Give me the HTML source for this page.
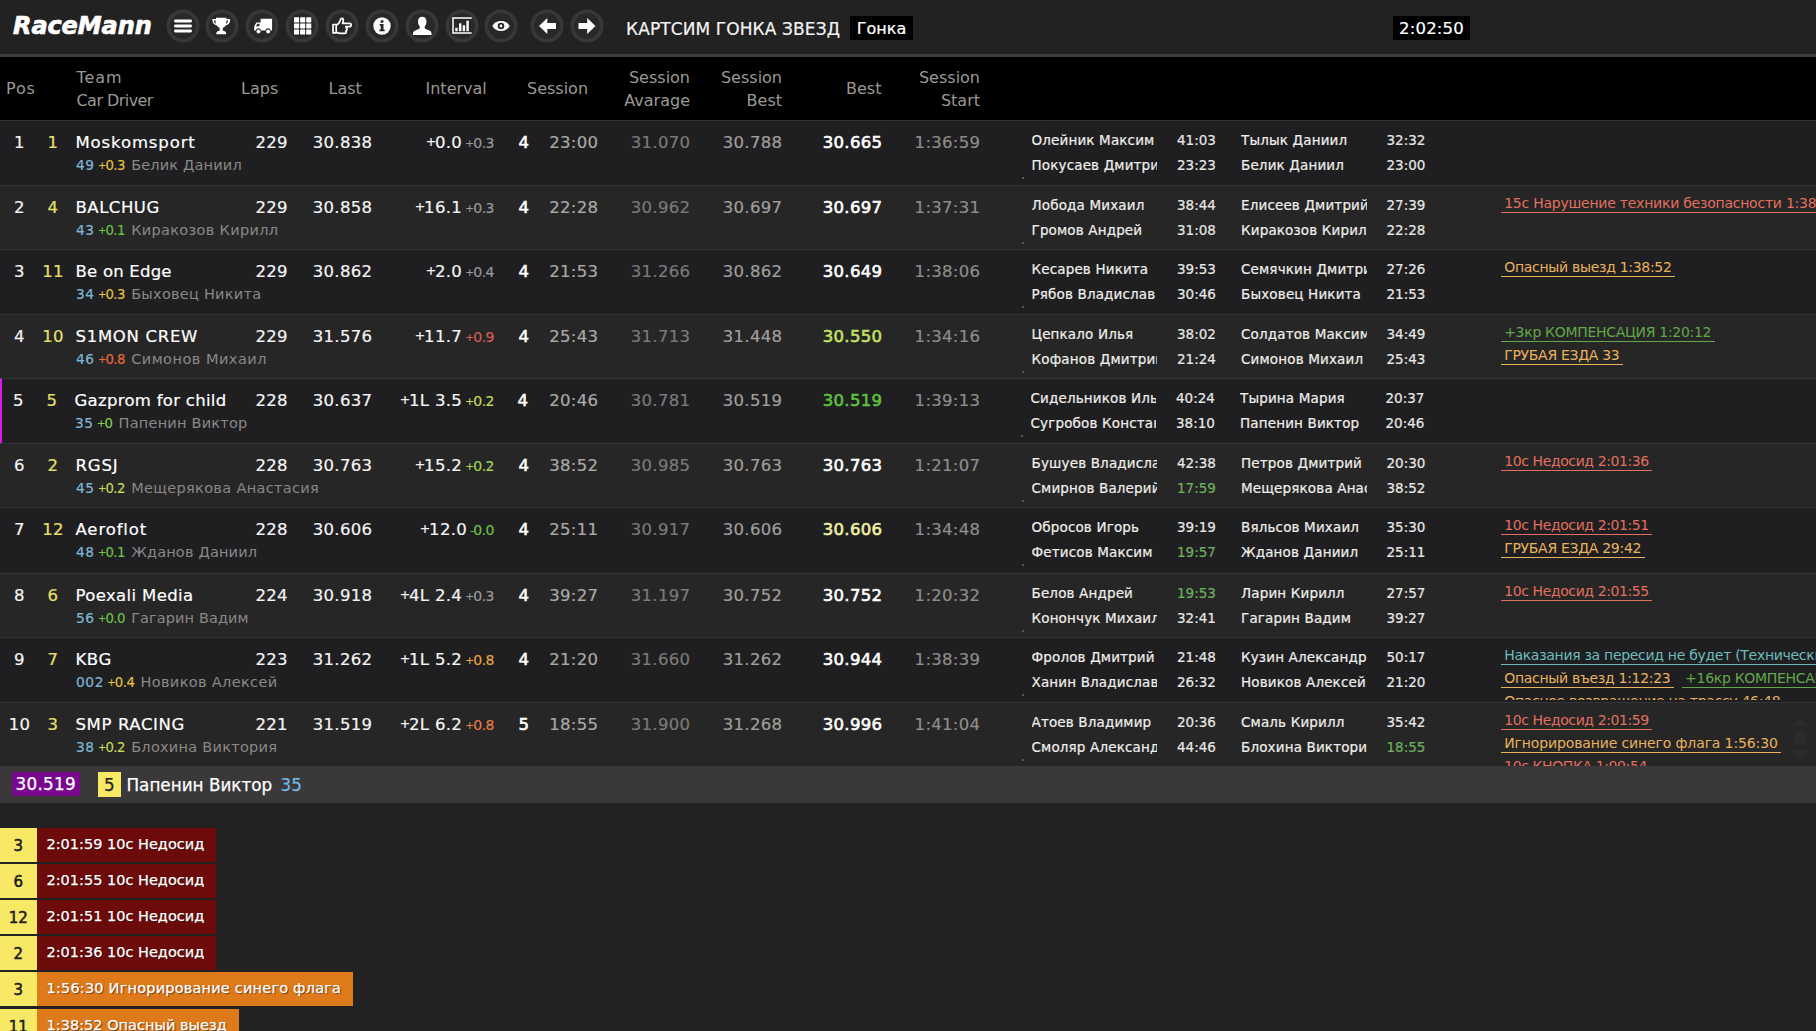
<!DOCTYPE html>
<html lang="ru"><head><meta charset="utf-8"><title>RaceMann</title>
<style>
html,body{margin:0;padding:0}
body{width:1816px;height:1031px;overflow:hidden;background:#222;color:#fff;font-family:"DejaVu Sans","Liberation Sans",sans-serif;position:relative}
i,em{font-style:normal}
#top{position:absolute;left:0;top:0;width:1816px;height:54px;background:#222;border-bottom:3px solid #3e3e3e}
#logo{position:absolute;left:13px;top:10.6px;font:italic bold 24px/30px "DejaVu Sans","Liberation Sans",sans-serif;color:#fff;letter-spacing:-0.1px;-webkit-text-stroke:0.7px #fff}
.ic{position:absolute;top:9px;width:34px;height:34px}
#title{position:absolute;left:626px;top:16.7px;letter-spacing:0.1px;-webkit-text-stroke:0.2px currentColor;font-size:17px;line-height:24px;color:#f4f4f4;white-space:nowrap}
#stype{position:absolute;left:850px;top:15.5px;width:63px;height:24px;background:#000;font-size:16px;line-height:25.6px;text-align:center;color:#fff;-webkit-text-stroke:0.2px #fff}
#clock{position:absolute;left:1393px;top:15.5px;width:77px;height:24px;background:#000;font-size:16.5px;line-height:25.6px;text-align:center;color:#fff;-webkit-text-stroke:0.2px #fff;letter-spacing:0.2px}
#thead{position:absolute;left:0;top:57px;width:1816px;height:63px;background:#000}
#thead span{position:absolute;font-size:16px;line-height:23px;color:#9a9893;white-space:nowrap}
#thead .h1{top:20.2px}
#thead .h2{top:9px}
#thead .rt{text-align:right}
.r{position:absolute;left:0;width:1816px;height:64.7px;overflow:hidden;box-sizing:border-box;border-top:1px solid #343436}
.r.odd{background:#1f1f21}
.r.even{background:#262626}
.r.cur{border-left:2px solid #dc1ae4}
.r.cur>span,.r.cur>div{margin-left:-3px}
.r>span{position:absolute;white-space:nowrap;line-height:20px}
.m{font-size:16.5px;top:12.1px;color:#f4f4f4;letter-spacing:0.3px;-webkit-text-stroke:0.2px currentColor}
.b{-webkit-text-stroke:0.6px currentColor;color:#fff}
.pos{left:0;width:39px;text-align:center}
.car{left:33px;width:40px;text-align:center;color:#e6e06c}
.team{left:75.5px;color:#fff;letter-spacing:0.75px}
.laps{right:1528.2px}
.last{right:1443.7px}
.intv{right:1322px}
.intv .pm{font-size:12.5px;position:relative;top:-1.7px;letter-spacing:-1.2px;margin-left:-1px}
.intv .d{font-size:14px;margin-left:4.2px;letter-spacing:-0.5px;-webkit-text-stroke:0.15px currentColor}
.intv .d .pm{font-size:10.5px;top:-1.5px;letter-spacing:-0.8px}
.sn{left:509px;width:30px;text-align:center}
.st{right:1217.7px;color:#aaa9a6}
.avg{right:1125.7px;color:#7b7a78}
.sb{right:1033.7px;color:#a09f9c}
.best{right:933.7px}
.start{right:835.7px;color:#8e8d8a}
.sub{left:76px;top:33.9px;font-size:14.5px}
.sub .k{font-size:13.75px;color:#7fb6d5;letter-spacing:0.6px;-webkit-text-stroke:0.2px currentColor}
.sub .kd .pm{font-size:10px;position:relative;top:-1.3px;letter-spacing:-0.8px}
.sub .kd{font-size:13.2px;letter-spacing:-0.5px;margin-left:3.2px;-webkit-text-stroke:0.15px currentColor}
.sub .dr{color:#8a8987;margin-left:6.2px;letter-spacing:0.2px}
.nm{font-size:13.5px;color:#efeeeb;overflow:hidden;letter-spacing:0.15px;-webkit-text-stroke:0.2px #efeeeb}
.tm{font-size:13.5px;color:#e9e8e5;-webkit-text-stroke:0.2px currentColor}
.n1{left:1031.5px;width:125.5px}
.t1{left:1177px}
.n2{left:1241px;width:126px}
.t2{left:1386.5px}
.l0{top:9.4px}
.l1{top:34.2px}
.tg{color:#6fae5f}
.dot{left:1022px;top:56px;width:1.5px;height:1.5px;background:#555}
/* colours for diffs */
.g{color:#9b9a98}.rd{color:#d85c5a}.yg{color:#c6dc58}.gy{color:#a5d84e}.gr{color:#6cc545}.gr2{color:#86d14b}
.og{color:#e6a645}.or2{color:#e07d45}.or{color:#e9693c}.y{color:#e7c23f}.ly{color:#f1f0a3}
.best.yg{color:#c3e062}.best.gr{color:#5ec03d}.best.ly{color:#f1f0a3}
/* penalties */
.pen{position:absolute;left:1501px;top:0;width:600px;height:61.8px;overflow:hidden}
.r.last .pen{height:64.2px}
.pl{position:absolute;left:0;white-space:nowrap;height:23px}
.pl:nth-child(1){top:7.2px}.pl:nth-child(2){top:30.2px}.pl:nth-child(3){top:53.2px}
.p{display:inline-block;font-size:14px;letter-spacing:-0.3px;line-height:19px;padding:0 3.5px 0 3.2px;border-bottom:1.5px solid currentColor;margin-right:8px;height:18.3px}
.p.pr{color:#e2705f;letter-spacing:-0.4px}
.p.po{color:#e9b25c}.p.pg{color:#62a84a}.p.pc{color:#6cbdb9}.p.w{letter-spacing:-0.13px}.p.w2{letter-spacing:-0.24px}
.scr{position:absolute;left:1791px;top:14px;width:18px;height:44px}
.scr b{position:absolute;left:0;display:block}
.scr .up{top:0;border:9px solid transparent;border-bottom:9px solid #2b2b2b;border-top:0}
.scr .ci{top:14px;left:2px;width:14px;height:14px;border-radius:7px;background:#2b2b2b}
.scr .dn{top:33px;border:9px solid transparent;border-top:9px solid #2b2b2b;border-bottom:0}
#bestbar{position:absolute;left:0;top:766px;width:1816px;height:36.6px;background:#3a3838}
#bestbar span{position:absolute;white-space:nowrap;line-height:24px;font-size:16.8px;-webkit-text-stroke:0.25px currentColor}
.bl{left:12px;top:6.2px;width:67.5px;height:24px;background:#78098f;letter-spacing:0.3px;text-align:center;color:#fff}
.bn{left:97.5px;top:5.5px;width:23.5px;height:25px;background:#f7e965;text-align:center;color:#222;line-height:26.5px!important}
.bd{left:126.5px;top:6.5px;color:#fff}
.bk{left:280.5px;top:6.5px;color:#71b7e2}
#msgs{position:absolute;left:0;top:828px;width:1816px;height:210px}
.msg{position:absolute;left:0;height:34px;white-space:nowrap}
.msg span{display:inline-block;height:33.75px;line-height:33px;font-size:14.5px;vertical-align:top}
.mn{width:36.5px;background:#f7e965;color:#1c1c1c;text-align:center;-webkit-text-stroke:0.55px #1c1c1c;font-size:15px!important;line-height:36px!important}
.mt{padding:0 12px 0 10px;color:#fff;text-shadow:1px 1px 1px rgba(0,0,0,.6);-webkit-text-stroke:0.25px #fff}
.mt.red{background:#6d0b0b}
.mt.org{background:#df7a1b;letter-spacing:0.2px}

</style></head><body>
<div id="top">
<div id="logo">RaceMann</div>
<svg class="ic" style="left:165.5px" viewBox="0 0 34 34"><circle cx="17" cy="17" r="14.700" fill="#282828" stroke="#373737" stroke-width="3.600"/><g fill="#fff"><rect x="8" y="10.5" width="18" height="3" rx="1.4"/><rect x="8" y="15.5" width="18" height="3" rx="1.4"/><rect x="8" y="20.5" width="18" height="3" rx="1.4"/></g></svg>
<svg class="ic" style="left:205px" viewBox="0 0 34 34"><circle cx="17" cy="17" r="14.700" fill="#282828" stroke="#373737" stroke-width="3.600"/><path fill="#fff" transform="translate(16.2 17) scale(1.1 1.04) translate(-16.2 -17)" d="M11.5 9h9.5v1.2h3.3v1.6c0 2.6-1.8 4.4-4 4.7-.7 1.2-1.6 2-2.6 2.4v2.6c1.6.2 3 .9 3 2.2V25H11.8v-1.3c0-1.3 1.400-2 3-2.200v-2.600c-1-.4-1.900-1.200-2.600-2.400-2.200-.3-4-2.100-4-4.700v-1.600h3.300zM9.600 11.600v.4c0 1.400.8 2.500 1.900 3-.3-1-.5-2.100-.5-3.400zm11.400 0c0 1.300-.2 2.400-.5 3.400 1.100-.5 1.900-1.600 1.900-3v-.4z"/></svg>
<svg class="ic" style="left:245px" viewBox="0 0 34 34"><circle cx="17" cy="17" r="14.700" fill="#282828" stroke="#373737" stroke-width="3.600"/><path fill="#fff" d="M15.600 9.800h11.500v11.700h-1.300a2.700 2.700 0 0 0-5.300 0h-4.400a2.700 2.700 0 0 0-5.300 0H9.200v-4.300l2.300-3.700h4.100zM12.400 14.700l-1.500 2.500h3.500v-2.500z"/><circle cx="13.500" cy="22.400" r="2" fill="#fff"/><circle cx="23.200" cy="22.400" r="2" fill="#fff"/></svg>
<svg class="ic" style="left:285px" viewBox="0 0 34 34"><circle cx="17" cy="17" r="14.700" fill="#282828" stroke="#373737" stroke-width="3.600"/><g fill="#fff"><rect x="9" y="8.3" width="5.100" height="5.100" rx=".4"/><rect x="15.1" y="8.3" width="5.100" height="5.100" rx=".4"/><rect x="21.2" y="8.3" width="5.100" height="5.100" rx=".4"/><rect x="9" y="14.4" width="5.100" height="5.100" rx=".4"/><rect x="15.1" y="14.4" width="5.100" height="5.100" rx=".4"/><rect x="21.2" y="14.4" width="5.100" height="5.100" rx=".4"/><rect x="9" y="20.5" width="5.100" height="5.100" rx=".4"/><rect x="15.1" y="20.5" width="5.100" height="5.100" rx=".4"/><rect x="21.2" y="20.5" width="5.100" height="5.100" rx=".4"/></g></svg>
<svg class="ic" style="left:325px" viewBox="0 0 34 34"><circle cx="17" cy="17" r="14.700" fill="#282828" stroke="#373737" stroke-width="3.600"/><path fill="none" stroke="#fff" stroke-width="1.700" stroke-linejoin="round" stroke-linecap="round" d="M8 15.500h3.200v8.300H8zM11.200 16c1.800-.6 3.300-2.400 4-4.600.4-1.500 1-2.300 2-2 1.200.4 1.300 1.800.9 3.200l-.6 1.700h6.700c1.300 0 2 .7 2 1.600 0 1-.8 1.700-2 1.700h-3.400M11.200 23.200c1.600.9 3 1.200 4.800 1.200h3.600c1 0 1.700-.6 1.700-1.400 0-.5-.2-.9-.6-1.100.8-.2 1.300-.8 1.300-1.500 0-.5-.3-1-.7-1.200.7-.2 1.200-.8 1.200-1.500"/></svg>
<svg class="ic" style="left:364.750px" viewBox="0 0 34 34"><circle cx="17" cy="17" r="14.700" fill="#282828" stroke="#373737" stroke-width="3.600"/><circle cx="17" cy="17" r="8.700" fill="#fff"/><path fill="#262626" d="M15.700 11.200h2.700v2.500h-2.700zM14.700 15h3.800v5.500h1.200v1.800h-5.300v-1.800h1.300v-3.700h-1z"/></svg>
<svg class="ic" style="left:404.750px" viewBox="0 0 34 34"><circle cx="17" cy="17" r="14.700" fill="#282828" stroke="#373737" stroke-width="3.600"/><path fill="#fff" d="M17.200 7.800c2.600 0 4.300 2 4.300 4.800 0 2-.7 3.800-1.800 4.900v1.300c0 .6.300 1 1 1.300l3.600 1.500c1.400.6 2.200 1.500 2.200 2.900V26H8v-1.500c0-1.400.8-2.300 2.200-2.900l3.600-1.500c.7-.3 1-.7 1-1.300v-1.300c-1.100-1.100-1.800-2.900-1.800-4.900 0-2.800 1.600-4.800 4.200-4.800z"/></svg>
<svg class="ic" style="left:444.500px" viewBox="0 0 34 34"><circle cx="17" cy="17" r="14.700" fill="#282828" stroke="#373737" stroke-width="3.600"/><path fill="none" stroke="#fff" stroke-width="1.500" d="M26.700 9H8v15h18.700"/><g fill="#fff"><rect x="10.300" y="18.800" width="2.400" height="3.400"/><rect x="14" y="14.300" width="2.400" height="7.900"/><rect x="17.700" y="16.300" width="2.400" height="5.900"/><rect x="21.400" y="11.700" width="2.400" height="10.500"/></g></svg>
<svg class="ic" style="left:484px" viewBox="0 0 34 34"><circle cx="17" cy="17" r="14.700" fill="#282828" stroke="#373737" stroke-width="3.600"/><path fill="#fff" d="M8.300 17c2-3.200 5-5 8.700-5s6.700 1.800 8.700 5c-2 3.200-5 5-8.700 5s-6.700-1.800-8.700-5z"/><circle cx="17" cy="17" r="3.300" fill="#262626"/><circle cx="17" cy="17" r="1.400" fill="#fff"/></svg>
<svg class="ic" style="left:530px" viewBox="0 0 34 34"><circle cx="17" cy="17" r="14.700" fill="#282828" stroke="#373737" stroke-width="3.600"/><path fill="#fff" d="M9 17l8.300-8.100v5.200H26v5.800h-8.700v5.200z"/></svg>
<svg class="ic" style="left:570px" viewBox="0 0 34 34"><circle cx="17" cy="17" r="14.700" fill="#282828" stroke="#373737" stroke-width="3.600"/><path fill="#fff" d="M25.500 17l-8.300-8.100v5.200H8.500v5.800h8.700v5.200z"/></svg>

<div id="title">КАРТСИМ ГОНКА ЗВЕЗД</div><div id="stype">Гонка</div><div id="clock">2:02:50</div>
</div>
<div id="thead">
<span class="h1" style="left:6px;letter-spacing:0.8px">Pos</span>
<span class="h2" style="left:76.5px"><i style="letter-spacing:0.9px">Team</i><br><i style="letter-spacing:-0.55px">Car Driver</i></span>
<span class="h1" style="left:241px">Laps</span>
<span class="h1" style="left:328.5px">Last</span>
<span class="h1" style="left:425.5px">Interval</span>
<span class="h1" style="left:527px">Session</span>
<span class="h2 rt" style="right:1126px">Session<br>Avarage</span>
<span class="h2 rt" style="right:1034px">Session<br>Best</span>
<span class="h1" style="left:846px">Best</span>
<span class="h2 rt" style="right:836px">Session<br>Start</span>
</div>
<div class="r odd" style="top:120.00px;height:65.00px"><span class="m pos">1</span><span class="m car">1</span><span class="m team" style="letter-spacing:0.88px">Moskomsport</span><span class="m laps">229</span><span class="m last">30.838</span><span class="m intv"><em class="pm">+</em>0.0<i class="d g"><em class="pm">+</em>0.3</i></span><span class="m b sn">4</span><span class="m st">23:00</span><span class="m avg">31.070</span><span class="m sb">30.788</span><span class="m b best ">30.665</span><span class="m start">1:36:59</span><span class="sub"><i class="k">49</i><i class="kd y"><em class="pm">+</em>0.3</i><i class="dr" style="letter-spacing:0.16px">Белик Даниил</i></span><span class="nm n1 l0">Олейник Максим</span><span class="tm t1 l0 ">41:03</span><span class="nm n1 l1">Покусаев Дмитрий</span><span class="tm t1 l1 ">23:23</span><span class="nm n2 l0">Тылык Даниил</span><span class="tm t2 l0 ">32:32</span><span class="nm n2 l1">Белик Даниил</span><span class="tm t2 l1 ">23:00</span><span class="dot"></span></div>
<div class="r even" style="top:185.00px;height:64.00px"><span class="m pos">2</span><span class="m car">4</span><span class="m team" style="letter-spacing:0.52px">BALCHUG</span><span class="m laps">229</span><span class="m last">30.858</span><span class="m intv"><em class="pm">+</em>16.1<i class="d g"><em class="pm">+</em>0.3</i></span><span class="m b sn">4</span><span class="m st">22:28</span><span class="m avg">30.962</span><span class="m sb">30.697</span><span class="m b best ">30.697</span><span class="m start">1:37:31</span><span class="sub"><i class="k">43</i><i class="kd gr"><em class="pm">+</em>0.1</i><i class="dr" style="letter-spacing:0.32px">Киракозов Кирилл</i></span><span class="nm n1 l0">Лобода Михаил</span><span class="tm t1 l0 ">38:44</span><span class="nm n1 l1">Громов Андрей</span><span class="tm t1 l1 ">31:08</span><span class="nm n2 l0">Елисеев Дмитрий</span><span class="tm t2 l0 ">27:39</span><span class="nm n2 l1">Киракозов Кирилл</span><span class="tm t2 l1 ">22:28</span><span class="dot"></span><div class="pen"><div class="pl"><span class="p pr w2">15с Нарушение техники безопасности 1:38:40</span></div></div></div>
<div class="r odd" style="top:249.00px;height:65.00px"><span class="m pos">3</span><span class="m car">11</span><span class="m team" style="letter-spacing:0.22px">Be on Edge</span><span class="m laps">229</span><span class="m last">30.862</span><span class="m intv"><em class="pm">+</em>2.0<i class="d g"><em class="pm">+</em>0.4</i></span><span class="m b sn">4</span><span class="m st">21:53</span><span class="m avg">31.266</span><span class="m sb">30.862</span><span class="m b best ">30.649</span><span class="m start">1:38:06</span><span class="sub"><i class="k">34</i><i class="kd y"><em class="pm">+</em>0.3</i><i class="dr" style="letter-spacing:0.25px">Быховец Никита</i></span><span class="nm n1 l0">Кесарев Никита</span><span class="tm t1 l0 ">39:53</span><span class="nm n1 l1">Рябов Владислав</span><span class="tm t1 l1 ">30:46</span><span class="nm n2 l0">Семячкин Дмитрий</span><span class="tm t2 l0 ">27:26</span><span class="nm n2 l1">Быховец Никита</span><span class="tm t2 l1 ">21:53</span><span class="dot"></span><div class="pen"><div class="pl"><span class="p po">Опасный выезд 1:38:52</span></div></div></div>
<div class="r even" style="top:314.00px;height:64.00px"><span class="m pos">4</span><span class="m car">10</span><span class="m team" style="letter-spacing:0.71px">S1MON CREW</span><span class="m laps">229</span><span class="m last">31.576</span><span class="m intv"><em class="pm">+</em>11.7<i class="d rd"><em class="pm">+</em>0.9</i></span><span class="m b sn">4</span><span class="m st">25:43</span><span class="m avg">31.713</span><span class="m sb">31.448</span><span class="m b best yg">30.550</span><span class="m start">1:34:16</span><span class="sub"><i class="k">46</i><i class="kd or"><em class="pm">+</em>0.8</i><i class="dr" style="letter-spacing:0.49px">Симонов Михаил</i></span><span class="nm n1 l0">Цепкало Илья</span><span class="tm t1 l0 ">38:02</span><span class="nm n1 l1">Кофанов Дмитрий</span><span class="tm t1 l1 ">21:24</span><span class="nm n2 l0">Солдатов Максим</span><span class="tm t2 l0 ">34:49</span><span class="nm n2 l1">Симонов Михаил</span><span class="tm t2 l1 ">25:43</span><span class="dot"></span><div class="pen"><div class="pl"><span class="p pg">+3кр КОМПЕНСАЦИЯ 1:20:12</span></div><div class="pl"><span class="p po">ГРУБАЯ ЕЗДА 33</span></div></div></div>
<div class="r odd cur" style="top:378.00px;height:65.00px"><span class="m pos">5</span><span class="m car">5</span><span class="m team" style="letter-spacing:0.29px">Gazprom for child</span><span class="m laps">228</span><span class="m last">30.637</span><span class="m intv"><em class="pm">+</em>1L 3.5<i class="d yg"><em class="pm">+</em>0.2</i></span><span class="m b sn">4</span><span class="m st">20:46</span><span class="m avg">30.781</span><span class="m sb">30.519</span><span class="m b best gr">30.519</span><span class="m start">1:39:13</span><span class="sub"><i class="k">35</i><i class="kd gr2"><em class="pm">+</em>0</i><i class="dr" style="letter-spacing:0.22px">Папенин Виктор</i></span><span class="nm n1 l0">Сидельников Илья</span><span class="tm t1 l0 ">40:24</span><span class="nm n1 l1">Сугробов Константин</span><span class="tm t1 l1 ">38:10</span><span class="nm n2 l0">Тырина Мария</span><span class="tm t2 l0 ">20:37</span><span class="nm n2 l1">Папенин Виктор</span><span class="tm t2 l1 ">20:46</span><span class="dot"></span></div>
<div class="r even" style="top:443.00px;height:64.00px"><span class="m pos">6</span><span class="m car">2</span><span class="m team" style="letter-spacing:0.85px">RGSJ</span><span class="m laps">228</span><span class="m last">30.763</span><span class="m intv"><em class="pm">+</em>15.2<i class="d gy"><em class="pm">+</em>0.2</i></span><span class="m b sn">4</span><span class="m st">38:52</span><span class="m avg">30.985</span><span class="m sb">30.763</span><span class="m b best ">30.763</span><span class="m start">1:21:07</span><span class="sub"><i class="k">45</i><i class="kd yg"><em class="pm">+</em>0.2</i><i class="dr" style="letter-spacing:0.33px">Мещерякова Анастасия</i></span><span class="nm n1 l0">Бушуев Владислав</span><span class="tm t1 l0 ">42:38</span><span class="nm n1 l1">Смирнов Валерий</span><span class="tm t1 l1 tg">17:59</span><span class="nm n2 l0">Петров Дмитрий</span><span class="tm t2 l0 ">20:30</span><span class="nm n2 l1">Мещерякова Анастасия</span><span class="tm t2 l1 ">38:52</span><span class="dot"></span><div class="pen"><div class="pl"><span class="p pr">10с Недосид 2:01:36</span></div></div></div>
<div class="r odd" style="top:507.00px;height:66.00px"><span class="m pos">7</span><span class="m car">12</span><span class="m team" style="letter-spacing:0.87px">Aeroflot</span><span class="m laps">228</span><span class="m last">30.606</span><span class="m intv"><em class="pm">+</em>12.0<i class="d gr"><em class="pm">-</em>0.0</i></span><span class="m b sn">4</span><span class="m st">25:11</span><span class="m avg">30.917</span><span class="m sb">30.606</span><span class="m b best ly">30.606</span><span class="m start">1:34:48</span><span class="sub"><i class="k">48</i><i class="kd gr"><em class="pm">+</em>0.1</i><i class="dr" style="letter-spacing:0.17px">Жданов Даниил</i></span><span class="nm n1 l0">Обросов Игорь</span><span class="tm t1 l0 ">39:19</span><span class="nm n1 l1">Фетисов Максим</span><span class="tm t1 l1 tg">19:57</span><span class="nm n2 l0">Вяльсов Михаил</span><span class="tm t2 l0 ">35:30</span><span class="nm n2 l1">Жданов Даниил</span><span class="tm t2 l1 ">25:11</span><span class="dot"></span><div class="pen"><div class="pl"><span class="p pr">10с Недосид 2:01:51</span></div><div class="pl"><span class="p po">ГРУБАЯ ЕЗДА 29:42</span></div></div></div>
<div class="r even" style="top:573.00px;height:64.00px"><span class="m pos">8</span><span class="m car">6</span><span class="m team" style="letter-spacing:0.37px">Poexali Media</span><span class="m laps">224</span><span class="m last">30.918</span><span class="m intv"><em class="pm">+</em>4L 2.4<i class="d g"><em class="pm">+</em>0.3</i></span><span class="m b sn">4</span><span class="m st">39:27</span><span class="m avg">31.197</span><span class="m sb">30.752</span><span class="m b best ">30.752</span><span class="m start">1:20:32</span><span class="sub"><i class="k">56</i><i class="kd gr"><em class="pm">+</em>0.0</i><i class="dr" style="letter-spacing:0.1px">Гагарин Вадим</i></span><span class="nm n1 l0">Белов Андрей</span><span class="tm t1 l0 tg">19:53</span><span class="nm n1 l1">Конончук Михаил</span><span class="tm t1 l1 ">32:41</span><span class="nm n2 l0">Ларин Кирилл</span><span class="tm t2 l0 ">27:57</span><span class="nm n2 l1">Гагарин Вадим</span><span class="tm t2 l1 ">39:27</span><span class="dot"></span><div class="pen"><div class="pl"><span class="p pr">10с Недосид 2:01:55</span></div></div></div>
<div class="r odd" style="top:637.00px;height:65.00px"><span class="m pos">9</span><span class="m car">7</span><span class="m team" style="letter-spacing:0.52px">KBG</span><span class="m laps">223</span><span class="m last">31.262</span><span class="m intv"><em class="pm">+</em>1L 5.2<i class="d og"><em class="pm">+</em>0.8</i></span><span class="m b sn">4</span><span class="m st">21:20</span><span class="m avg">31.660</span><span class="m sb">31.262</span><span class="m b best ">30.944</span><span class="m start">1:38:39</span><span class="sub"><i class="k">002</i><i class="kd y"><em class="pm">+</em>0.4</i><i class="dr" style="letter-spacing:0.35px">Новиков Алексей</i></span><span class="nm n1 l0">Фролов Дмитрий</span><span class="tm t1 l0 ">21:48</span><span class="nm n1 l1">Ханин Владислав</span><span class="tm t1 l1 ">26:32</span><span class="nm n2 l0">Кузин Александр</span><span class="tm t2 l0 ">50:17</span><span class="nm n2 l1">Новиков Алексей</span><span class="tm t2 l1 ">21:20</span><span class="dot"></span><div class="pen"><div class="pl"><span class="p pc">Наказания за пересид не будет (Технические причины) 1:15:02</span></div><div class="pl"><span class="p po">Опасный въезд 1:12:23</span><span class="p pg">+16кр КОМПЕНСАЦИЯ 1:05:10</span></div><div class="pl"><span class="p po">Опасное возвращение на трассу 46:48</span></div></div></div>
<div class="r even last" style="top:702.00px;height:64.20px"><span class="m pos">10</span><span class="m car">3</span><span class="m team" style="letter-spacing:0.62px">SMP RACING</span><span class="m laps">221</span><span class="m last">31.519</span><span class="m intv"><em class="pm">+</em>2L 6.2<i class="d or2"><em class="pm">+</em>0.8</i></span><span class="m b sn">5</span><span class="m st">18:55</span><span class="m avg">31.900</span><span class="m sb">31.268</span><span class="m b best ">30.996</span><span class="m start">1:41:04</span><span class="sub"><i class="k">38</i><i class="kd yg"><em class="pm">+</em>0.2</i><i class="dr" style="letter-spacing:0.26px">Блохина Виктория</i></span><span class="nm n1 l0">Атоев Владимир</span><span class="tm t1 l0 ">20:36</span><span class="nm n1 l1">Смоляр Александр</span><span class="tm t1 l1 ">44:46</span><span class="nm n2 l0">Смаль Кирилл</span><span class="tm t2 l0 ">35:42</span><span class="nm n2 l1">Блохина Виктория</span><span class="tm t2 l1 tg">18:55</span><span class="dot"></span><div class="pen"><div class="pl"><span class="p pr">10с Недосид 2:01:59</span></div><div class="pl"><span class="p po w">Игнорирование синего флага 1:56:30</span></div><div class="pl"><span class="p pr">10с КНОПКА 1:00:54</span></div></div><div class="scr"><b class="up"></b><b class="ci"></b><b class="dn"></b></div></div>
<div id="bestbar"><span class="bl">30.519</span><span class="bn">5</span><span class="bd">Папенин Виктор</span><span class="bk">35</span></div>
<div id="msgs">
<div class="msg" style="top:0.00px"><span class="mn">3</span><span class="mt red">2:01:59 10с Недосид</span></div>
<div class="msg" style="top:36.12px"><span class="mn">6</span><span class="mt red">2:01:55 10с Недосид</span></div>
<div class="msg" style="top:72.24px"><span class="mn">12</span><span class="mt red">2:01:51 10с Недосид</span></div>
<div class="msg" style="top:108.36px"><span class="mn">2</span><span class="mt red">2:01:36 10с Недосид</span></div>
<div class="msg" style="top:144.48px"><span class="mn">3</span><span class="mt org">1:56:30 Игнорирование синего флага</span></div>
<div class="msg" style="top:180.60px"><span class="mn">11</span><span class="mt org" style="letter-spacing:0.02px">1:38:52 Опасный выезд</span></div>
</div>
</body></html>
